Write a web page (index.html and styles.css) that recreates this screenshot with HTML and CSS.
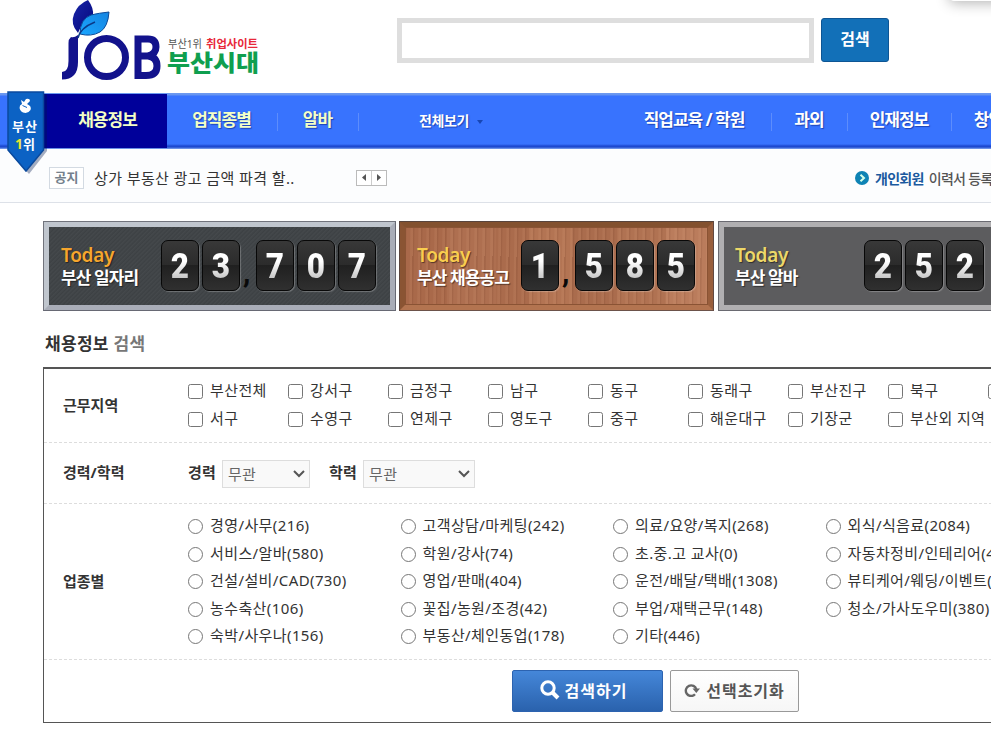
FILE: index.html
```html
<!DOCTYPE html>
<html lang="ko">
<head>
    <meta charset="UTF-8">
    <meta name="viewport" content="width=device-width, initial-scale=1.0">
    <title>부산시대</title>
    <link rel="stylesheet" href="styles.css">
</head>
<body>
    <div class="top-popup"></div>

    <div class="header">
        <a class="logo">
            <svg width="200" height="82" viewBox="0 0 200 82">
                <defs>
                    <linearGradient id="leafDark" x1="0" y1="0" x2="1" y2="1">
                        <stop offset="0" stop-color="#1826a8"/>
                        <stop offset="1" stop-color="#06067c"/>
                    </linearGradient>
                    <linearGradient id="leafLight" x1="0" y1="1" x2="1" y2="0">
                        <stop offset="0" stop-color="#1aa6ff"/>
                        <stop offset="1" stop-color="#1584e0"/>
                    </linearGradient>
                </defs>
                <path d="M11 37Q14 38 18 35V62Q18 79.500 2 79.500V72Q8.500 72 8.500 61V43Q8.500 39 11 37Z" fill="#12128c"/>
                <circle cx="46.500" cy="57.500" r="19" fill="none" stroke="#12128c" stroke-width="7"/>
                <path d="M78 39H88Q96 39 96 47Q96 54 88 56Q97 57 97 66Q97 75.500 86 75.500H78Z M78 56H89" fill="none" stroke="#12128c" stroke-width="7"/>
                <path d="M18 33Q10 24 14 14Q18 4 28 0Q34 8 33 16Q22 21 18 33Z" fill="url(#leafDark)"/>
                <path d="M20 34Q20 19 31 15Q39 13 49 12Q48 27 40 32Q31 37 20 34Z" fill="url(#leafLight)" stroke="#0b4a98" stroke-width="1"/>
                <path d="M18 38Q20 28 35 22" fill="none" stroke="#0b3a88" stroke-width="1.500"/>
                <text x="108" y="47.500" class="logo-small" textLength="34" lengthAdjust="spacingAndGlyphs">부산1위</text>
                <text x="146" y="47.500" class="logo-small logo-red" textLength="52" lengthAdjust="spacingAndGlyphs">취업사이트</text>
                <text x="107" y="70.500" class="logo-big" textLength="92" lengthAdjust="spacingAndGlyphs">부산시대</text>
            </svg>
        </a>
        <input type="text" class="search-input">
        <button class="search-btn">검색</button>
    </div>

    <div class="nav">
        <div class="nav-item active">채용정보</div>
        <div class="nav-item yellow w110 line">업직종별</div>
        <div class="nav-item yellow w81 line">알바</div>
        <div class="nav-all">전체보기 <span class="arrow-down"></span></div>
        <div class="nav-item w153 line">직업교육 / 학원</div>
        <div class="nav-item w76 line">과외</div>
        <div class="nav-item w104 line">인재정보</div>
        <div class="nav-item w104">창업정보</div>
        <div class="ribbon">
            <svg width="44" height="84" viewBox="0 0 44 84">
                <path d="M6 3H43V60L25 83L6 62Z" fill="#00164d" opacity=".35"/>
                <path d="M4 1H39.500V59L22 80L4 59Z" fill="#0c62c4" stroke="#0a4a9e" stroke-width="1.500"/>
                <path d="M17 9L20 11L22 8Q26 7 26 10L23 13Q28 15 26.500 19Q24 23 19 21.500Q14.500 19 16 14.500L18 13Z" fill="#fff"/>
                <path d="M18.500 14.500L23 16.500" stroke="#0c62c4" stroke-width="1"/>
                <text x="8" y="40" class="ribbon-text" textLength="25">부산</text>
                <text x="11" y="58" class="ribbon-text ribbon-one">1</text>
                <text x="19" y="58" class="ribbon-text">위</text>
            </svg>
        </div>
    </div>

    <div class="notice">
        <span class="notice-tag">공지</span>
        <span class="notice-text">상가 부동산 광고 금액 파격 할..</span>
        <span class="notice-arrows">
            <span><svg width="4" height="7"><path d="M4 0V7L0 3.500Z" fill="#555"/></svg></span>
            <span><svg width="4" height="7"><path d="M0 0V7L4 3.500Z" fill="#555"/></svg></span>
        </span>
        <span class="notice-member">
            <svg width="14" height="14" viewBox="0 0 14 14"><circle cx="7" cy="7" r="7" fill="#0e83b4"/><path d="M5.500 3.800L9 7L5.500 10.200" fill="none" stroke="#d5ffe8" stroke-width="2"/></svg>
            <b>개인회원</b>
            <span>이력서 등록</span>
        </span>
    </div>

    <div class="container">
        <div class="boards">
            <div class="board board-steel">
                <div class="board-label"><em>Today</em><strong>부산 일자리</strong></div>
                <div class="digits">
                    <i><b>2</b></i><i><b>3</b></i><u>,</u><i><b>7</b></i><i><b>0</b></i><i><b>7</b></i>
                </div>
            </div>
            <div class="board board-wood">
                <div class="board-label"><em>Today</em><strong>부산 채용공고</strong></div>
                <div class="digits">
                    <i><b>1</b></i><u>,</u><i><b>5</b></i><i><b>8</b></i><i><b>5</b></i>
                </div>
            </div>
            <div class="board board-gray">
                <div class="board-label"><em>Today</em><strong>부산 알바</strong></div>
                <div class="digits">
                    <i><b>2</b></i><i><b>5</b></i><i><b>2</b></i>
                </div>
            </div>
        </div>

        <h2 class="title">채용정보 <span>검색</span></h2>

        <div class="search-box">
            <div class="row row-area">
                <div class="row-label">근무지역</div>
                <div class="areas">
                    <label><input type="checkbox">부산전체</label>
                    <label><input type="checkbox">강서구</label>
                    <label><input type="checkbox">금정구</label>
                    <label><input type="checkbox">남구</label>
                    <label><input type="checkbox">동구</label>
                    <label><input type="checkbox">동래구</label>
                    <label><input type="checkbox">부산진구</label>
                    <label><input type="checkbox">북구</label>
                    <label><input type="checkbox"></label>
                    <label><input type="checkbox">서구</label>
                    <label><input type="checkbox">수영구</label>
                    <label><input type="checkbox">연제구</label>
                    <label><input type="checkbox">영도구</label>
                    <label><input type="checkbox">중구</label>
                    <label><input type="checkbox">해운대구</label>
                    <label><input type="checkbox">기장군</label>
                    <label><input type="checkbox">부산외 지역</label>
                </div>
            </div>
            <div class="row row-career">
                <div class="row-label">경력/학력</div>
                <div class="careers">
                    <b>경력</b>
                    <div class="select select-career">무관<svg width="12" height="8" viewBox="0 0 12 8"><path d="M1 1L6 6L11 1" fill="none" stroke="#555" stroke-width="2"/></svg></div>
                    <b>학력</b>
                    <div class="select select-school">무관<svg width="12" height="8" viewBox="0 0 12 8"><path d="M1 1L6 6L11 1" fill="none" stroke="#555" stroke-width="2"/></svg></div>
                </div>
            </div>
            <div class="row row-job">
                <div class="row-label">업종별</div>
                <div class="jobs">
                    <label><input type="radio" name="job">경영/사무(216)</label>
                    <label><input type="radio" name="job">고객상담/마케팅(242)</label>
                    <label><input type="radio" name="job">의료/요양/복지(268)</label>
                    <label><input type="radio" name="job">외식/식음료(2084)</label>
                    <label><input type="radio" name="job">서비스/알바(580)</label>
                    <label><input type="radio" name="job">학원/강사(74)</label>
                    <label><input type="radio" name="job">초.중.고 교사(0)</label>
                    <label><input type="radio" name="job">자동차정비/인테리어(432)</label>
                    <label><input type="radio" name="job">건설/설비/CAD(730)</label>
                    <label><input type="radio" name="job">영업/판매(404)</label>
                    <label><input type="radio" name="job">운전/배달/택배(1308)</label>
                    <label><input type="radio" name="job">뷰티케어/웨딩/이벤트(210)</label>
                    <label><input type="radio" name="job">농수축산(106)</label>
                    <label><input type="radio" name="job">꽃집/농원/조경(42)</label>
                    <label><input type="radio" name="job">부업/재택근무(148)</label>
                    <label><input type="radio" name="job">청소/가사도우미(380)</label>
                    <label><input type="radio" name="job">숙박/사우나(156)</label>
                    <label><input type="radio" name="job">부동산/체인동업(178)</label>
                    <label><input type="radio" name="job">기타(446)</label>
                </div>
            </div>
            <div class="buttons">
                <button class="btn-search">
                    <svg width="20" height="20" viewBox="0 0 20 20"><circle cx="8" cy="8" r="6.200" fill="none" stroke="#fff" stroke-width="3"/><path d="M12.500 12.500L18 18" stroke="#fff" stroke-width="4"/></svg>
                    검색하기
                </button>
                <button class="btn-reset">
                    <svg width="16" height="14" viewBox="0 0 16 14"><path d="M11 11.300A5.300 5.300 0 1 1 12.300 6.500" fill="none" stroke="#666" stroke-width="2.400"/><path d="M8.500 5.500H16L12.300 10Z" fill="#666"/></svg>
                    선택초기화
                </button>
            </div>
        </div>
    </div>
</body>
</html>
```
FILE: styles.css
```css
* {
    box-sizing: border-box;
}

body {
    margin: 0;
    overflow: hidden;
    position: relative;
    height: 736px;
    background: #fff;
    font-family: "Noto Sans", "Noto Sans CJK KR", sans-serif;
    font-size: 15px;
    color: #333;
}

button {
    font-family: inherit;
    padding: 0;
}

.top-popup {
    position: absolute;
    left: 949px;
    top: -20px;
    width: 100px;
    height: 21px;
    border-radius: 5px;
    background: #fff;
    box-shadow: 0 2px 14px rgba(0,0,0,0.3);
}

/* header */
.header {
    display: flex;
    align-items: flex-start;
    height: 93px;
    padding-left: 60px;
}

.logo {
    width: 337px;
}

.logo svg {
    display: block;
}

.logo-small {
    font-size: 11px;
    fill: #555;
}

.logo-red {
    fill: #e8283a;
    font-weight: 700;
}

.logo-big {
    font-size: 23px;
    font-weight: 900;
    fill: #0f9f4f;
}

.search-input {
    width: 417px;
    height: 45px;
    margin: 18px 7px 0 0;
    border: 5px solid #dedede;
    background: #fff;
}

.search-btn {
    width: 68px;
    height: 44px;
    margin-top: 18px;
    padding-bottom: 4px;
    border: 1px solid #0d5594;
    border-radius: 3px;
    background: #1270b8;
    color: #fff;
    font-size: 16px;
    font-weight: 700;
}

/* nav */
.nav {
    position: relative;
    display: flex;
    width: 100%;
    height: 56px;
    padding-left: 44px;
    background: linear-gradient(#6e9bf0 0, #6694f0 2px, #3873fe 3px, #3873fe 51px, #1d49cf 53px, #1d49cf 54px, #86a8ef 56px);
}

.nav-item {
    position: relative;
    flex: none;
    padding-right: 2px;
    line-height: 54px;
    text-align: center;
    color: #fff;
    font-size: 17px;
    font-weight: 700;
    letter-spacing: -1px;
    text-shadow: 1px 1px 1px rgba(0,20,110,0.5);
}

.nav-item.line::after {
    content: "";
    position: absolute;
    right: 0;
    top: 20px;
    width: 1px;
    height: 18px;
    background: #5d8dfc;
}

.nav-item.active {
    width: 123px;
    height: 54px;
    margin-top: 1px;
    line-height: 52px;
    padding-left: 6px;
    background: #00009a;
    color: #f4ffc8;
}

.yellow {
    color: #f4ffc8;
}

.w110 { width: 111px; }
.w81 { width: 81px; }
.w153 { width: 154px; }
.w76 { width: 76px; }
.w104 { width: 104px; }

.nav-all {
    flex: none;
    width: 259px;
    padding-left: 60px;
    line-height: 55px;
    color: #fff;
    font-size: 14px;
    font-weight: 700;
    letter-spacing: -0.4px;
    text-shadow: 1px 1px 1px rgba(0,20,110,0.5);
}

.arrow-down {
    display: inline-block;
    margin: 0 0 2px 5px;
    border: 3px solid transparent;
    border-top: 4px solid #1746b4;
    border-bottom: 0;
}

.ribbon {
    position: absolute;
    left: 4px;
    top: -2px;
}

.ribbon-text {
    font-size: 13px;
    font-weight: 700;
    fill: #fff;
}

.ribbon-one {
    fill: #e8e832;
    font-size: 14px;
}

/* notice */
.notice {
    display: flex;
    align-items: center;
    height: 54px;
    padding: 4px 0 0 49px;
    border-bottom: 1px solid #dde1e8;
    background: #fcfdfe;
    white-space: nowrap;
}

.notice-tag {
    flex: none;
    width: 35px;
    height: 22px;
    line-height: 19px;
    border: 1px solid #d3dae2;
    text-align: center;
    font-size: 13px;
    font-weight: 700;
    color: #74808c;
    background: #fff;
}

.notice-text {
    flex: none;
    width: 272px;
    padding-left: 10px;
    letter-spacing: 0.4px;
}

.notice-arrows {
    flex: none;
    display: flex;
    width: 31px;
    height: 16px;
    border: 1px solid #bbb;
    background: #fff;
}

.notice-arrows span {
    flex: 1;
    display: flex;
    align-items: center;
    justify-content: center;
}

.notice-arrows span + span {
    border-left: 1px solid #ccc;
}

.notice-member {
    flex: none;
    display: flex;
    align-items: center;
    margin-left: 468px;
    font-size: 14px;
    font-weight: 500;
    letter-spacing: -0.7px;
    color: #555;
}

.notice-member svg {
    margin-right: 6px;
}

.notice-member b {
    margin-right: 5px;
    color: #1a5a9e;
}

/* boards */
.container {
    width: 948px;
    margin-left: 43px;
    padding-top: 18px;
    overflow: hidden;
}

.boards {
    display: flex;
    height: 90px;
}

.board {
    display: flex;
    justify-content: space-between;
    flex: none;
    height: 90px;
    border: 6px solid;
    outline: 1px solid rgba(60,60,70,0.6);
    outline-offset: -1px;
}

.board-steel {
    width: 353px;
    margin-right: 3px;
    padding: 0 14px 0 12px;
    border-color: #c0c6ce #a9adb8 #a9adb8 #c0c6ce;
    background: repeating-linear-gradient(135deg, #45494c 0, #3d4144 2px, #45494c 3px);
}

.board-wood {
    width: 315px;
    margin-right: 4px;
    padding: 0 13px 0 12px;
    border-color: #83512f #995e3c #b37450 #8a5433;
    background:
        repeating-linear-gradient(91deg, rgba(90,40,20,0.12) 0 1px, transparent 2px 5px, rgba(255,200,160,0.08) 6px 8px),
        linear-gradient(90deg, #a9694a 0 14%, #ae6f50 14% 30%, #aa6b4c 30% 41%, #b37453 41% 55%, #aa6c4d 55% 70%, #b07252 70% 86%, #ba7c5c 86%);
    box-shadow: inset 0 0 0 1px #8a5334;
}

.board-gray {
    width: 349px;
    padding: 0 77px 0 11px;
    border-color: #b0afb1;
    background: #5c5c5e;
}

.board-label {
    padding-top: 17px;
    white-space: nowrap;
    text-shadow: 1px 1px 1px rgba(0,0,0,0.5);
}

.board-label em {
    display: block;
    font: 600 19px/23px "Noto Sans", sans-serif;
    letter-spacing: -0.3px;
    color: #f6a62d;
}

.board-wood em {
    color: #f9cd4f;
}

.board-gray em {
    color: #ecd769;
}

.board-label strong {
    display: block;
    font-size: 17px;
    line-height: 22px;
    letter-spacing: -0.9px;
    color: #fff;
}

.digits {
    display: flex;
    gap: 3px;
    padding-top: 13px;
}

.digits i {
    width: 38px;
    height: 51px;
    border: 1px solid #080808;
    border-radius: 7px;
    background: linear-gradient(#383838 0, #2b2b2b 49%, #202020 50%, #303030 100%);
    box-shadow: 1px 1px 1px rgba(255,255,255,0.25);
    font: normal 700 35px/51px Roboto, sans-serif;
    text-align: center;
}

.digits i b {
    display: block;
    transform: scaleX(0.9);
    color: transparent;
    background: linear-gradient(#fff 40%, #c4c4c4 75%);
    background-clip: text;
    -webkit-background-clip: text;
}

.digits u {
    width: 10px;
    font: 700 30px/66px Roboto, sans-serif;
    color: #090909;
    text-decoration: none;
}

/* search box */
.title {
    margin: 20px 0 0 2px;
    height: 36px;
    line-height: 25px;
    font-size: 17px;
    letter-spacing: 0.3px;
    color: #333;
}

.title span {
    color: #777;
}

.search-box {
    width: 1045px;
    height: 356px;
    border: 1px solid #555;
    border-top: 2px solid #555;
}

.row {
    display: flex;
    align-items: center;
    border-bottom: 1px dashed #ddd;
}

.row-area {
    height: 74px;
    padding-bottom: 2px;
}

.row-career {
    height: 61px;
}

.row-job {
    height: 156px;
    padding-bottom: 2px;
}

.row-label {
    flex: none;
    width: 144px;
    padding: 0 0 1px 19px;
    font-size: 15px;
    font-weight: 700;
}

.row-career .row-label {
    padding-bottom: 3px;
}

.areas {
    display: grid;
    flex: none;
    grid-template-columns: repeat(9, 100px);
    grid-auto-rows: 28px;
}

.jobs {
    display: grid;
    flex: none;
    grid-template-columns: repeat(4, 212.5px);
    grid-auto-rows: 27.5px;
}

.areas label,
.jobs label {
    display: flex;
    align-items: center;
    letter-spacing: 0.4px;
    white-space: nowrap;
    line-height: 27px;
}

.areas input,
.jobs input {
    flex: none;
    width: 15px;
    height: 15px;
    margin: 2px 7px 0 0;
}

.careers {
    display: flex;
    align-items: center;
    padding-top: 1px;
}

.careers b {
    margin-right: 6px;
    padding-bottom: 4px;
    letter-spacing: 0.2px;
}

.select {
    display: flex;
    align-items: center;
    justify-content: space-between;
    height: 28px;
    padding: 0 4px 0 5px;
    border: 1px solid #ddd;
    background: #f9f9f9;
    color: #666;
    letter-spacing: 0.3px;
}

.select-career {
    width: 88px;
    margin-right: 19px;
}

.select-school {
    width: 112px;
}

.buttons {
    display: flex;
    gap: 7px;
    padding: 10px 0 0 468px;
}

.buttons button {
    display: flex;
    align-items: center;
    justify-content: center;
    height: 42px;
    padding-bottom: 2px;
    border-radius: 2px;
    font-size: 16px;
    font-weight: 700;
}

.buttons .btn-search {
    width: 151px;
    padding-right: 8px;
    gap: 5px;
    border: 1px solid #2c63b0;
    background: linear-gradient(#4587d9, #2a62ad);
    color: #fff;
    letter-spacing: 1px;
}

.buttons .btn-reset {
    width: 129px;
    gap: 6px;
    border: 1px solid #999;
    background: linear-gradient(#fff, #f6f6f6);
    color: #555;
    letter-spacing: 1px;
}
```
